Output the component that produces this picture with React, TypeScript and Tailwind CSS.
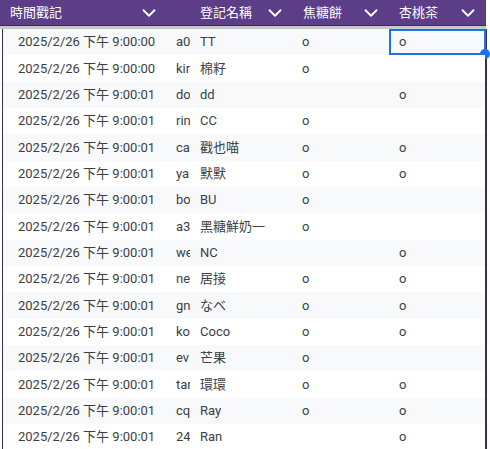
import { ChevronDown } from 'lucide-react';

type Row = { time: string; id: string; name: string; cake: string; tea: string };

const rows: Row[] = [
  { time: '2025/2/26 下午 9:00:00', id: 'a0', name: 'TT', cake: 'o', tea: 'o' },
  { time: '2025/2/26 下午 9:00:00', id: 'kir', name: '棉籽', cake: 'o', tea: '' },
  { time: '2025/2/26 下午 9:00:01', id: 'do', name: 'dd', cake: '', tea: 'o' },
  { time: '2025/2/26 下午 9:00:01', id: 'rin', name: 'CC', cake: 'o', tea: '' },
  { time: '2025/2/26 下午 9:00:01', id: 'ca', name: '戳也喵', cake: 'o', tea: 'o' },
  { time: '2025/2/26 下午 9:00:01', id: 'ya', name: '默默', cake: 'o', tea: 'o' },
  { time: '2025/2/26 下午 9:00:01', id: 'bo', name: 'BU', cake: 'o', tea: '' },
  { time: '2025/2/26 下午 9:00:01', id: 'a3', name: '黑糖鮮奶一', cake: 'o', tea: '' },
  { time: '2025/2/26 下午 9:00:01', id: 'we', name: 'NC', cake: '', tea: 'o' },
  { time: '2025/2/26 下午 9:00:01', id: 'ne', name: '居接', cake: 'o', tea: 'o' },
  { time: '2025/2/26 下午 9:00:01', id: 'gn', name: 'なべ', cake: 'o', tea: 'o' },
  { time: '2025/2/26 下午 9:00:01', id: 'ko', name: 'Coco', cake: 'o', tea: 'o' },
  { time: '2025/2/26 下午 9:00:01', id: 'ev', name: '芒果', cake: 'o', tea: '' },
  { time: '2025/2/26 下午 9:00:01', id: 'tar', name: '環環', cake: 'o', tea: 'o' },
  { time: '2025/2/26 下午 9:00:01', id: 'cq', name: 'Ray', cake: 'o', tea: 'o' },
  { time: '2025/2/26 下午 9:00:01', id: '24', name: 'Ran', cake: '', tea: 'o' },
];

function HeaderCell({ label, width }: { label: string; width: string }) {
  return (
    <div className={`flex items-center justify-between pl-[10px] pr-[12px] ${width}`}>
      <span className="truncate">{label}</span>
      <ChevronDown size={22} strokeWidth={2} className="shrink-0 -mr-[5px]" />
    </div>
  );
}

export default function App() {
  return (
    <div className="relative w-[490px] h-[449px] overflow-hidden bg-white font-['Roboto','Noto_Sans_CJK_TC',sans-serif]">
      {/* Header */}
      <div className="w-[486px]">
        <div className="flex h-[26px] bg-[#5b3d88] text-white text-[13px] border-b border-[#3d2a5c]">
          <HeaderCell label="時間戳記" width="w-[167px]" />
          <div className="w-[23px]" />
          <HeaderCell label="登記名稱" width="w-[103px]" />
          <HeaderCell label="焦糖餅" width="w-[96px]" />
          <HeaderCell label="杏桃茶" width="w-[97px]" />
        </div>
        <div className="h-[3px] bg-[#c8c8c8]" />
      </div>

      {/* Rows */}
      <div className="ml-[2px] w-[485px] border-l border-r-2 border-[#3b2d55] text-[13px] text-[#3c4043]">
        {rows.map((r, i) => (
          <div
            key={i}
            className={`relative flex items-center h-[26.33px] ${i % 2 === 0 ? 'bg-[#f8f9fa]' : 'bg-white'}`}
          >
            <div className="w-[164px] pl-[15px] whitespace-nowrap">{r.time}</div>
            <div className="w-[23px] pl-[9px] overflow-hidden whitespace-nowrap">{r.id}</div>
            <div className="w-[103px] pl-[10px] whitespace-nowrap overflow-hidden">{r.name}</div>
            <div className="w-[96px] pl-[9px]">{r.cake}</div>
            <div className="w-[96px] pl-[10px]">{r.tea}</div>
            {i === 0 && (
              <div className="absolute left-[386px] top-0 w-[97px] h-full border-2 border-[#1a73e8]">
                <div className="absolute -right-[6px] -bottom-[6px] w-[10px] h-[10px] rounded-full bg-[#1a73e8]" />
              </div>
            )}
          </div>
        ))}
        <div className="h-[26px] bg-[#f8f9fa]" />
      </div>
    </div>
  );
}
